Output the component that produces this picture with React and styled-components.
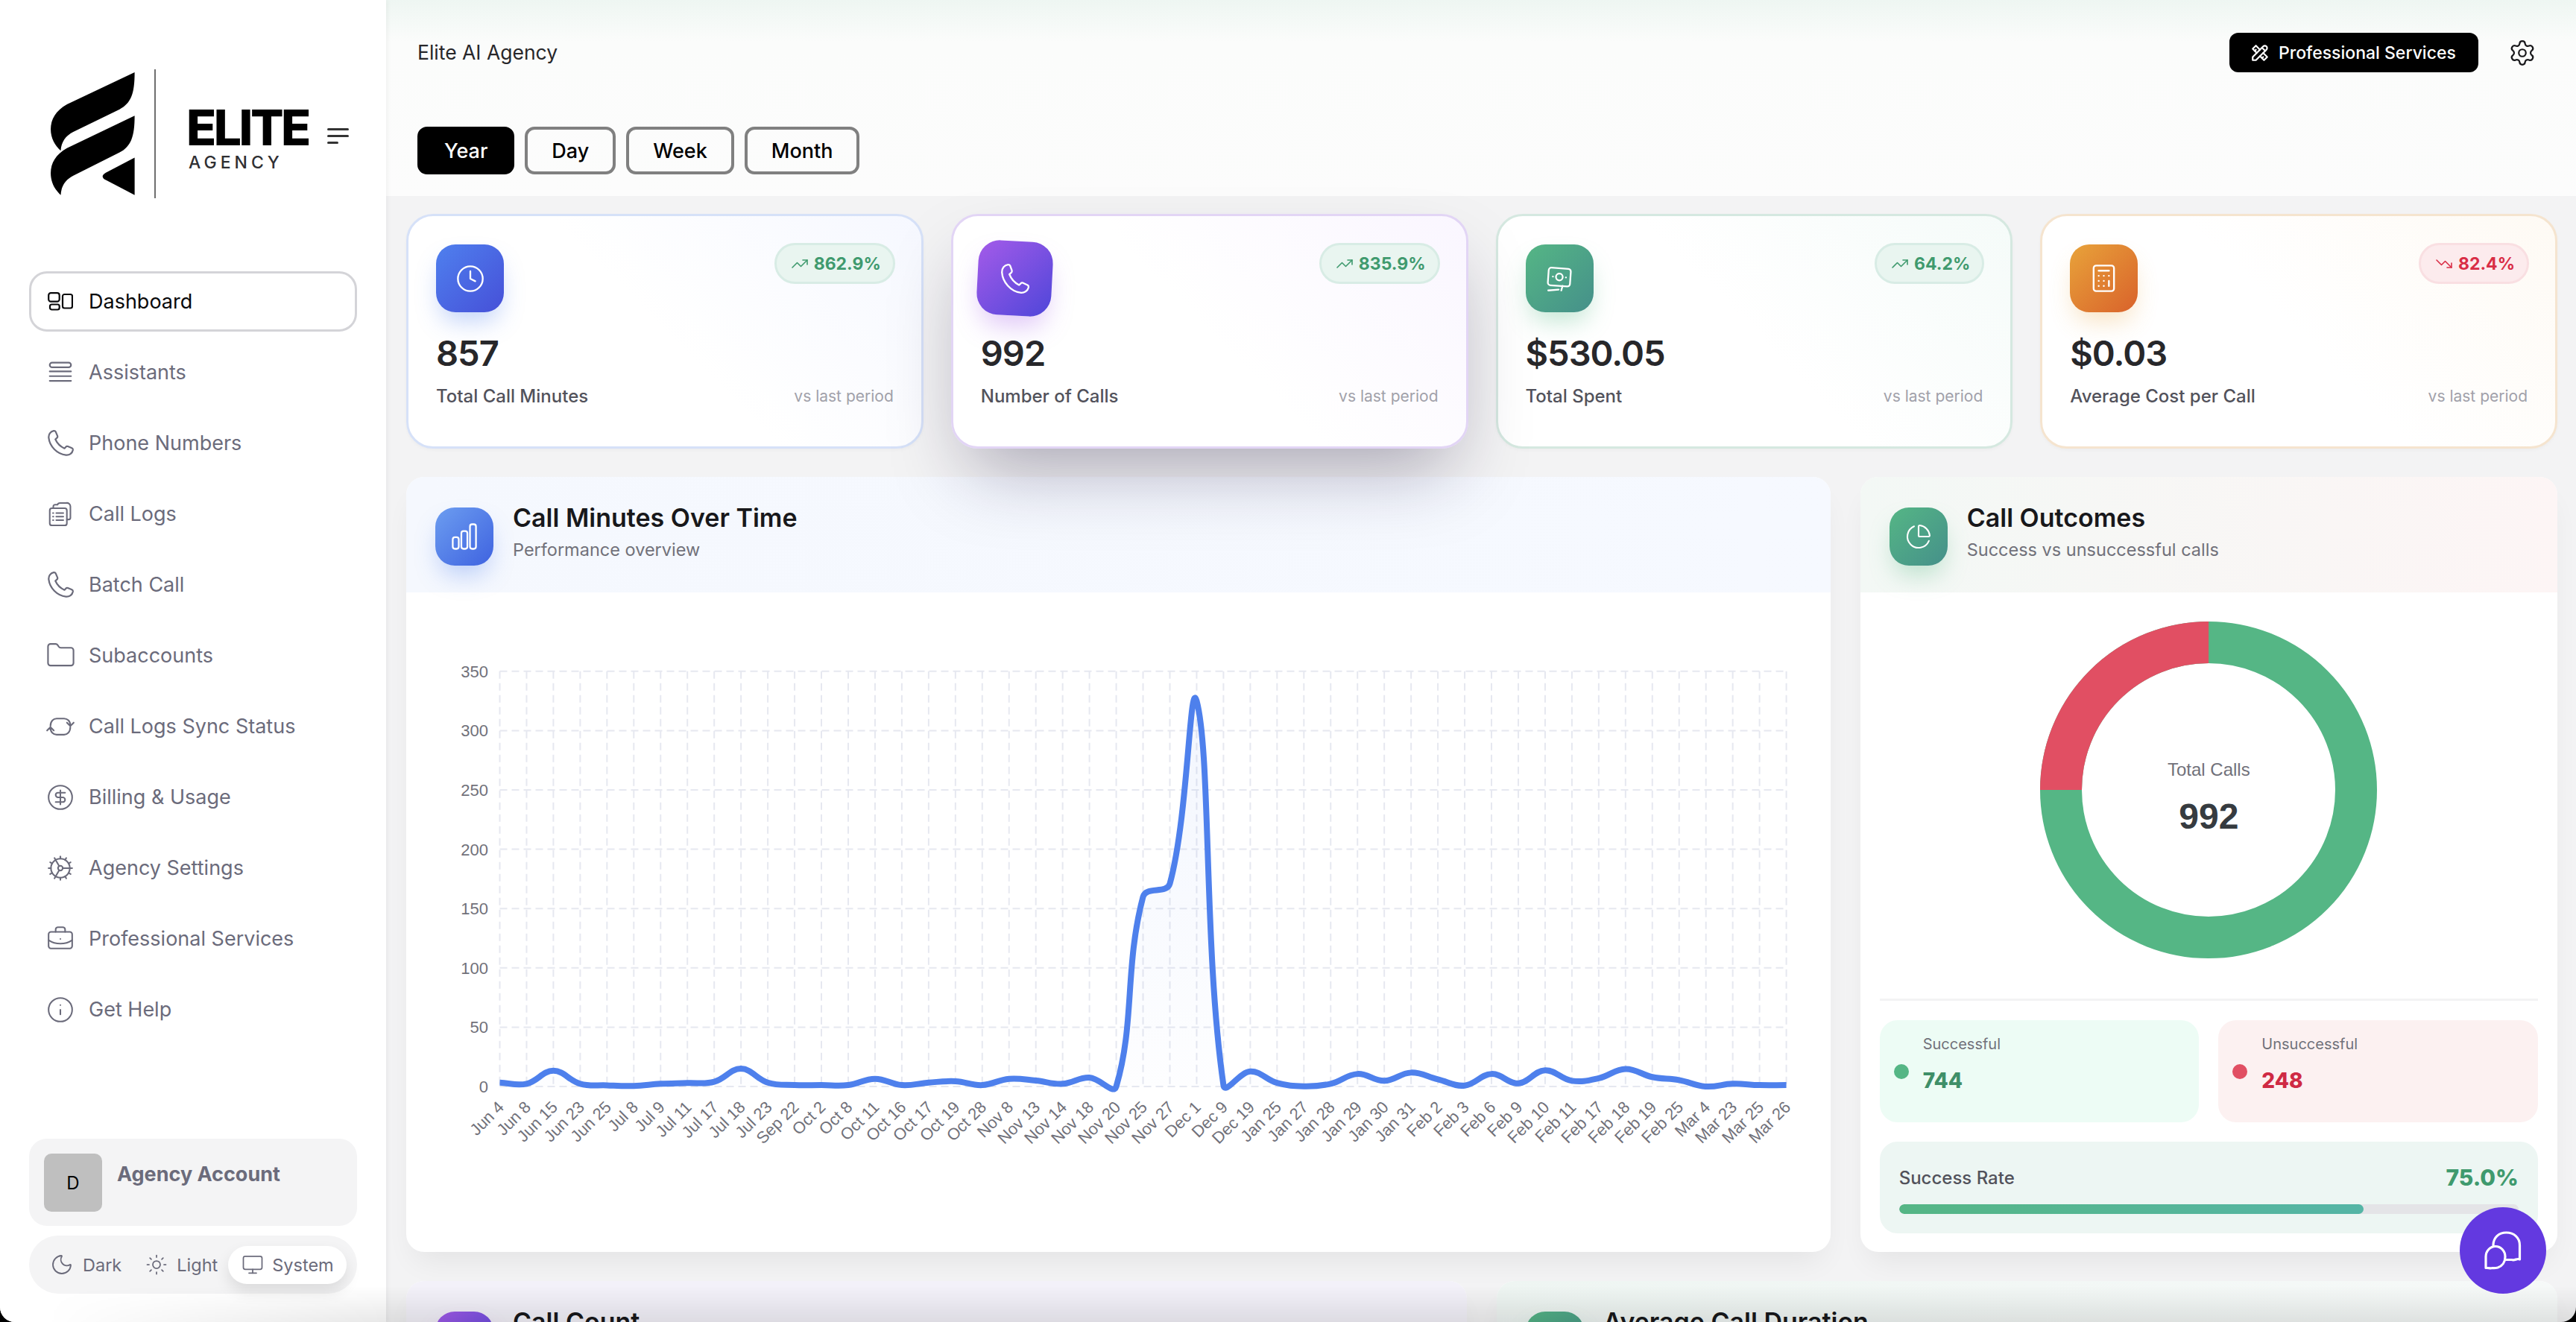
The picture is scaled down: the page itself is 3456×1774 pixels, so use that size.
import styled, { createGlobalStyle } from 'styled-components';
import {
    Folder,
    CircleDollarSign,
    Cog,
    BriefcaseBusiness,
    Info,
    Moon,
    Sun,
    Monitor,
    Clock,
    Calculator,
    ChartPie,
    TrendingUp,
    TrendingDown,
    Settings,
} from 'lucide-react';
import { TbTools } from 'react-icons/tb';

const GlobalStyle = createGlobalStyle`
    html, body {
        margin: 0;
        padding: 0;
        height: 100%;
        background: #000;
        overflow: hidden;
    }
    * {
        box-sizing: border-box;
    }
    body {
        font-family: Inter, "Noto Sans", sans-serif;
    }
`;

const Page = styled.div`
    position: relative;
    display: flex;
    width: 3456px;
    height: 1774px;
    overflow: hidden;
    background: #f3f3f4;
    border-radius: 0 0 20px 20px;
`;

const Sidebar = styled.aside`
    position: relative;
    z-index: 3;
    flex: 0 0 518px;
    min-width: 0;
    width: 518px;
    display: flex;
    flex-direction: column;
    padding: 93px 39px 38px;
    background: #fff;
    box-shadow: 2px 0 6px rgba(0, 0, 0, 0.05);
`;

const LogoRow = styled.div`
    display: flex;
    align-items: flex-start;
    height: 173px;
    margin-bottom: 98px;
    padding-left: 29px;
`;

const LogoDivider = styled.div`
    flex: 0 0 2px;
    height: 173px;
    margin: 0 41px 0 26px;
    background: #6f6f6f;
`;

const LogoText = styled.div`
    display: flex;
    flex-direction: column;
    padding-top: 50px;
`;

const LogoName = styled.div`
    font-size: 66px;
    line-height: 56px;
    font-weight: 800;
    color: #000;
    letter-spacing: -3.5px;
`;

const LogoSub = styled.div`
    margin: 6px 0 0 3px;
    font-size: 23px;
    line-height: 26px;
    font-weight: 500;
    letter-spacing: 5px;
    color: #2f2f33;
`;

const MenuLines = styled.div`
    display: flex;
    flex-direction: column;
    gap: 6px;
    margin: 79px 0 0 25px;
`;

const MenuLine = styled.span`
    display: block;
    height: 3px;
    width: ${(p) => p.$w}px;
    background: #333;
    border-radius: 2px;
`;

const NavList = styled.nav`
    display: flex;
    flex-direction: column;
    gap: 14px;
`;

const NavItem = styled.a`
    display: flex;
    align-items: center;
    gap: 21px;
    height: 81px;
    padding: 0 22px;
    border-radius: 24px;
    border: 3px solid ${(p) => (p.$active ? '#d4d4d8' : 'transparent')};
    color: ${(p) => (p.$active ? '#09090b' : '#6b6b7b')};
    font-size: 27px;
    font-weight: 400;
    white-space: nowrap;
`;

const NavIconBox = styled.span`
    display: flex;
    align-items: center;
    justify-content: center;
    flex: 0 0 34px;
    width: 34px;
    height: 34px;
    svg {
        flex-shrink: 0;
    }
`;

const SideBottom = styled.div`
    display: flex;
    flex-direction: column;
    gap: 13px;
    margin-top: auto;
`;

const AccountCard = styled.div`
    display: flex;
    gap: 20px;
    height: 117px;
    padding: 20px;
    background: #f4f4f5;
    border-radius: 24px;
`;

const Avatar = styled.div`
    display: flex;
    align-items: center;
    justify-content: center;
    width: 78px;
    height: 78px;
    border-radius: 10px;
    background: #bfbfbf;
    color: #000;
    font-size: 24px;
`;

const AccountName = styled.div`
    margin-top: 12px;
    font-size: 27px;
    line-height: 32px;
    font-weight: 700;
    color: #6b6b7b;
`;

const ThemeSwitch = styled.div`
    display: flex;
    align-items: center;
    height: 78px;
    padding: 0 13px 0 28px;
    background: #f4f4f5;
    border-radius: 39px;
`;

const ThemeOption = styled.div`
    display: flex;
    align-items: center;
    gap: ${(p) => p.$gap}px;
    height: 51px;
    margin-left: ${(p) => p.$ml || 0}px;
    padding: ${(p) => (p.$active ? '0 17px 0 18px' : '0')};
    border-radius: 26px;
    font-size: 23.5px;
    color: #6b6b7b;
    background: ${(p) => (p.$active ? '#fff' : 'transparent')};
    box-shadow: ${(p) => (p.$active ? '0 10px 20px rgba(0, 0, 0, 0.1)' : 'none')};
`;

const Main = styled.main`
    flex: 1;
    min-width: 0;
    display: flex;
    flex-direction: column;
`;

const Header = styled.header`
    flex: 0 0 263px;
    padding: 44px 53px 0 42px;
    background: linear-gradient(#eef6f2 0, #fbfcfb 56px, #fcfcfc 100%);
`;

const HeaderTop = styled.div`
    display: flex;
    align-items: center;
    justify-content: space-between;
    height: 53px;
    margin-bottom: 73px;
`;

const BrandTitle = styled.div`
    margin-top: -2px;
    font-size: 26.5px;
    color: #27272a;
`;

const HeaderActions = styled.div`
    display: flex;
    align-items: center;
    gap: 40px;
    color: #18181b;
`;

const ServicesButton = styled.button`
    display: flex;
    align-items: center;
    gap: 12px;
    width: 334px;
    height: 53px;
    padding: 0 0 0 28px;
    border: 0;
    border-radius: 12px;
    background: #000;
    color: #fff;
    font-family: inherit;
    font-size: 23px;
    font-weight: 500;
    white-space: nowrap;
`;

const Tabs = styled.div`
    display: flex;
    gap: 14px;
`;

const Tab = styled.button`
    height: 64px;
    padding: 0 32px;
    border: 4px solid ${(p) => (p.$active ? '#000' : '#808080')};
    border-radius: 13px;
    background: ${(p) => (p.$active ? '#000' : 'transparent')};
    color: ${(p) => (p.$active ? '#fff' : '#000')};
    font-family: inherit;
    font-size: 27px;
    font-weight: 500;
`;

const Content = styled.div`
    display: flex;
    flex-direction: column;
    padding: 24px 25px 0 27px;
`;

const StatGrid = styled.div`
    display: grid;
    grid-template-columns: repeat(4, 1fr);
    gap: 37px;
    height: 315px;
    margin-bottom: 38px;
`;

const tones = {
    blue: { border: '#d6e1f8', tint: '#f6f8ff', from: '#4f80ee', to: '#4650d8', glow: 'rgba(79, 128, 238, 0.35)' },
    purple: { border: '#e2d5f5', tint: '#faf6ff', from: '#a45be9', to: '#4f46d9', glow: 'rgba(164, 91, 233, 0.35)' },
    green: { border: '#d5e8e0', tint: '#f5fbf9', from: '#55b685', to: '#45908a', glow: 'rgba(85, 182, 133, 0.35)' },
    orange: { border: '#f5e4cf', tint: '#fefaf4', from: '#e8a33a', to: '#d9622b', glow: 'rgba(232, 163, 58, 0.3)' },
    sky: { border: '#d6e1f8', tint: '#f6f8ff', from: '#6c9df0', to: '#3f63e0', glow: 'rgba(79, 128, 238, 0.35)' },
};

const StatCard = styled.div`
    position: relative;
    z-index: ${(p) => (p.$hover ? 2 : 0)};
    display: flex;
    flex-direction: column;
    padding: 38px 37px 0;
    border: 3px solid ${(p) => tones[p.$tone].border};
    border-radius: 36px;
    background: linear-gradient(225deg, ${(p) => tones[p.$tone].tint}, #fff 50%);
    box-shadow: ${(p) => (p.$hover ? '0 50px 100px -24px rgba(30, 20, 60, 0.34)' : '0 2px 4px rgba(0, 0, 0, 0.03)')};
`;

const StatTop = styled.div`
    display: flex;
    align-items: flex-start;
    justify-content: space-between;
    height: 102px;
`;

const IconTile = styled.div`
    display: flex;
    align-items: center;
    justify-content: center;
    flex: 0 0 auto;
    width: ${(p) => p.$size}px;
    height: ${(p) => p.$size}px;
    border-radius: 26px;
    color: #fff;
    background: linear-gradient(135deg, ${(p) => tones[p.$tone].from}, ${(p) => tones[p.$tone].to});
    box-shadow: 0 18px 32px -6px ${(p) => tones[p.$tone].glow};
    transform: ${(p) => (p.$hover ? 'rotate(3deg) scale(1.1)' : 'none')};
`;

const TrendBadge = styled.div`
    display: flex;
    align-items: center;
    gap: 7px;
    height: 55px;
    margin: -2px -2px 0 0;
    padding: 0 16px 0 19px;
    border-radius: 28px;
    border: 3px solid ${(p) => (p.$down ? '#f9dfe2' : '#d8ece5')};
    background: ${(p) => (p.$down ? '#fcebed' : '#e9f5f0')};
    color: ${(p) => (p.$down ? '#d92d46' : '#3f9a6e')};
    font-size: 23px;
    font-weight: 700;
`;

const StatValue = styled.div`
    margin-top: 12px;
    font-size: 47px;
    line-height: 64px;
    font-weight: 600;
    color: #27272a;
    letter-spacing: -1px;
`;

const StatFoot = styled.div`
    display: flex;
    align-items: center;
    justify-content: space-between;
    margin-top: 11px;
`;

const StatLabel = styled.div`
    font-size: 24px;
    font-weight: 500;
    color: #52525b;
`;

const StatNote = styled.div`
    font-size: 21px;
    color: #a1a1aa;
`;

const ChartRow = styled.div`
    display: grid;
    grid-template-columns: repeat(3, 1fr);
    gap: 40px;
    height: 1040px;
    margin-bottom: 39px;
`;

const Panel = styled.section`
    grid-column: span ${(p) => p.$span || 1};
    display: flex;
    flex-direction: column;
    min-width: 0;
    border-radius: 24px;
    background: #fff;
    box-shadow: 0 22px 40px -12px rgba(0, 0, 0, 0.07);
    overflow: hidden;
`;

const PanelHeader = styled.div`
    flex: 0 0 155px;
    display: flex;
    align-items: flex-start;
    gap: 26px;
    padding: 41px 39px 0;
    background: ${(p) => p.$bg};
`;

const PanelHeading = styled.div`
    margin-top: -6px;
`;

const PanelTitle = styled.h2`
    margin: 0;
    font-size: 34px;
    line-height: 40px;
    font-weight: 600;
    color: #18181b;
    white-space: nowrap;
`;

const PanelSub = styled.p`
    margin: 8px 0 0;
    font-size: 23.5px;
    line-height: 30px;
    color: #71717a;
`;

const ChartBody = styled.div`
    flex: 1;
    line-height: 0;
`;

const AxisText = styled.text`
    font-family: "Liberation Sans", Arial, sans-serif;
    font-size: 22px;
    fill: #71717a;
`;

const OutcomeBody = styled.div`
    flex: 1;
    display: flex;
    flex-direction: column;
    padding: 39px 26px 0;
`;

const DonutWrap = styled.div`
    position: relative;
    width: 452px;
    height: 452px;
    margin: 0 auto 54px;
`;

const DonutCenter = styled.div`
    position: absolute;
    inset: 0;
    display: flex;
    flex-direction: column;
    align-items: center;
    padding-top: 185px;
    font-family: "Liberation Sans", Arial, sans-serif;
`;

const DonutLabel = styled.div`
    font-size: 24px;
    line-height: 28px;
    color: #71717a;
`;

const DonutValue = styled.div`
    margin-top: 21px;
    font-size: 48px;
    line-height: 56px;
    font-weight: 700;
    color: #363b40;
`;

const Divider = styled.hr`
    width: 100%;
    height: 3px;
    margin: 0 0 26px;
    border: 0;
    background: #f3f3f4;
`;

const OutcomeGrid = styled.div`
    display: grid;
    grid-template-columns: 1fr 1fr;
    gap: 26px;
    margin-bottom: 26px;
`;

const OutcomeBox = styled.div`
    display: flex;
    align-items: center;
    gap: 19px;
    height: 137px;
    padding: 0 19px;
    border-radius: 24px;
    background: ${(p) => (p.$bad ? '#fcf1f1' : '#edfcf5')};
`;

const OutcomeDot = styled.span`
    flex: 0 0 20px;
    height: 20px;
    border-radius: 50%;
    background: ${(p) => (p.$bad ? '#e14f63' : '#55b685')};
`;

const OutcomeText = styled.div`
    align-self: flex-start;
    display: flex;
    flex-direction: column;
    padding-top: 18px;
`;

const OutcomeLabel = styled.div`
    font-size: 20px;
    line-height: 28px;
    color: #71717a;
`;

const OutcomeValue = styled.div`
    margin-top: 17px;
    font-size: 28px;
    line-height: 36px;
    font-weight: 800;
    color: ${(p) => (p.$bad ? '#cf2a44' : '#3f8f68')};
`;

const RateBox = styled.div`
    height: 123px;
    padding: 30px 26px 0;
    border-radius: 24px;
    background: #edf6f3;
`;

const RateTop = styled.div`
    display: flex;
    align-items: center;
    justify-content: space-between;
    height: 36px;
    margin-bottom: 18px;
`;

const RateLabel = styled.div`
    font-size: 24px;
    font-weight: 500;
    color: #52525b;
`;

const RateValue = styled.div`
    font-size: 30px;
    font-weight: 800;
    color: #3f9a6e;
`;

const RateTrack = styled.div`
    height: 13px;
    border-radius: 7px;
    background: #e4e4e7;
    overflow: hidden;
`;

const RateFill = styled.div`
    height: 100%;
    border-radius: 7px;
    background: linear-gradient(90deg, #55b685, #55b5a6);
`;

const BottomRow = styled.div`
    display: grid;
    grid-template-columns: 1fr 1fr;
    gap: 40px;
`;

const ChatButton = styled.button`
    position: absolute;
    z-index: 5;
    right: 40px;
    bottom: 38px;
    display: flex;
    align-items: center;
    justify-content: center;
    width: 116px;
    height: 116px;
    padding: 0;
    border: 0;
    border-radius: 50%;
    background: #6339e0;
`;

const BottomFade = styled.div`
    position: absolute;
    z-index: 4;
    left: 0;
    right: 0;
    bottom: 0;
    height: 48px;
    background: linear-gradient(to top, rgba(0, 0, 0, 0.09), transparent);
    mask-image: linear-gradient(to right, transparent 60px, #000 518px);
    pointer-events: none;
`;

const Glyph = ({ children, size = 38, w = 1.4 }) => (
    <svg width={size} height={size} viewBox="0 0 24 24" fill="none" stroke="currentColor" strokeWidth={w} strokeLinecap="round" strokeLinejoin="round">
        {children}
    </svg>
);

const PHONE = 'M6.5 2.5C4 3 2.3 5.2 2.6 8C3.4 14.8 9.2 20.6 16 21.4C18.8 21.7 21 20 21.5 17.5C21.6 16.8 21.3 16.2 20.7 15.9L17.6 14.6C17 14.4 16.4 14.5 16 15L14.9 16.2C12 14.9 9.1 12 7.8 9.1L9 8C9.5 7.6 9.6 7 9.4 6.4L8.1 3.3C7.8 2.7 7.2 2.4 6.5 2.5Z';

const PhoneIcon = ({ size = 35, w = 1.3 }) => (
    <svg width={size} height={size} viewBox="1.8 1.8 20.4 20.4" fill="none" stroke="currentColor" strokeWidth={w} strokeLinejoin="round">
        <path d={PHONE} />
    </svg>
);

const DashIcon = () => (
    <svg width="34" height="26" viewBox="0 0 34 26" fill="none" stroke="currentColor" strokeWidth="2.2">
        <rect x="1.2" y="1.2" width="14.5" height="11.5" rx="3" />
        <rect x="3" y="16.5" width="12.7" height="7" rx="2.5" />
        <rect x="20" y="3" width="13" height="18.5" rx="2.5" />
    </svg>
);

const AssistantsIcon = () => (
    <Glyph>
        <rect x="3" y="3.5" width="18" height="4" rx="2" />
        <path d="M3 11h18M3 15h18M3 19h18" />
    </Glyph>
);

const LogsIcon = () => (
    <Glyph w={1.3}>
        <path d="M6 7V5.5A1.5 1.5 0 0 1 7.5 4h2c.3-1 1-1.5 2.2-1.5H17a3 3 0 0 1 3.5 3V15a1.5 1.5 0 0 1-1.5 1.5h-1.5" />
        <rect x="3" y="7" width="14.5" height="14.5" rx="1.8" />
        <path d="M8.5 11h6M8.5 14h6M8.5 17h6M5.7 11h.4M5.7 14h.4M5.7 17h.4" />
    </Glyph>
);

const SyncIcon = () => (
    <Glyph size={40} w={1.25}>
        <path d="M4 11.5C4 7.5 6.5 5.5 9 5.5h6c2.5 0 5 2 5 5.5M17.3 8.8L20 11.6L22.7 8.8" />
        <path d="M20 12.5c0 4-2.5 6-5 6H9c-2.5 0-5-2-5-5.5M1.3 15.2L4 12.4L6.7 15.2" />
    </Glyph>
);

const BillIcon = () => (
    <Glyph size={42} w={1.3}>
        <g transform="rotate(4 12 11)">
            <rect x="3.5" y="4" width="17" height="13.5" rx="2" />
            <circle cx="12" cy="10.7" r="2.6" />
            <path d="M7 10.7h.1M17 10.7h.1" />
        </g>
        <path d="M3.5 21l8-.6M14.5 17.5l-1 3.5" />
    </Glyph>
);

const BarsIcon = () => (
    <Glyph size={44} w={1.25}>
        <rect x="3.5" y="12.5" width="4.4" height="8.5" rx="1.6" />
        <rect x="9.8" y="8" width="4.4" height="13" rx="1.6" />
        <rect x="16.1" y="3" width="4.4" height="18" rx="1.6" />
    </Glyph>
);

const ChatIcon = () => (
    <svg width="50" height="52" viewBox="0 0 50 52" fill="none" stroke="#fff" strokeWidth="3.2" strokeLinejoin="round" strokeLinecap="round">
        <path d="M12 19C12 8.5 19.5 2 29.5 2S47.5 8.5 47.5 19V38C44 36 41 40 37 38.5H29" />
        <path d="M28 34.5C28 26.5 22 20.5 15 20.5S2 26.5 2 34.5V49.5C5.5 49 7.5 50.5 11 49.5C14 50 16 49.5 18 49C24 47 28 41.5 28 34.5Z" />
    </svg>
);

const LogoMark = () => (
    <svg width="113" height="165" viewBox="205 292 336 491" fill="#000" style={{ flexShrink: 0, marginTop: 4 }}>
        <path d="M540 292L270 420C225 445 205 480 205 520C205 555 222 585 245 605C247 570 265 545 295 530L480 440C525 415 540 380 540 292Z" />
        <path d="M540 465L270 595C225 620 205 655 205 695C205 730 222 762 245 782C247 745 265 720 295 705L480 612C525 588 540 550 540 465Z" />
        <path d="M540 633L425 693C408 703 408 712 425 722L540 782Z" />
    </svg>
);

const navItems = [
    { label: 'Dashboard', icon: <DashIcon />, active: true },
    { label: 'Assistants', icon: <AssistantsIcon /> },
    { label: 'Phone Numbers', icon: <PhoneIcon /> },
    { label: 'Call Logs', icon: <LogsIcon /> },
    { label: 'Batch Call', icon: <PhoneIcon /> },
    { label: 'Subaccounts', icon: <Folder size={41} strokeWidth={1.25} /> },
    { label: 'Call Logs Sync Status', icon: <SyncIcon /> },
    { label: 'Billing & Usage', icon: <CircleDollarSign size={38} strokeWidth={1.3} /> },
    { label: 'Agency Settings', icon: <Cog size={38} strokeWidth={1.3} /> },
    { label: 'Professional Services', icon: <BriefcaseBusiness size={38} strokeWidth={1.3} /> },
    { label: 'Get Help', icon: <Info size={38} strokeWidth={1.3} /> },
];

const stats = [
    { tone: 'blue', value: '857', label: 'Total Call Minutes', trend: '862.9%', icon: <Clock size={40} strokeWidth={1.4} /> },
    { tone: 'purple', value: '992', label: 'Number of Calls', trend: '835.9%', icon: <PhoneIcon size={36} w={1.2} />, hover: true },
    { tone: 'green', value: '$530.05', label: 'Total Spent', trend: '64.2%', icon: <BillIcon /> },
    { tone: 'orange', value: '$0.03', label: 'Average Cost per Call', trend: '82.4%', icon: <Calculator size={41} strokeWidth={1.4} />, down: true },
];

const series = [
    ['Jun 4', 3.3], ['Jun 8', 2.3], ['Jun 15', 13.3], ['Jun 23', 2.3], ['Jun 25', 1], ['Jul 8', 0.5], ['Jul 9', 2.3],
    ['Jul 11', 3], ['Jul 17', 4], ['Jul 18', 15], ['Jul 23', 3.3], ['Sep 22', 1.2], ['Oct 2', 1.2], ['Oct 8', 1.2],
    ['Oct 11', 6.5], ['Oct 16', 1.2], ['Oct 17', 3.3], ['Oct 19', 4.4], ['Oct 28', 1.2], ['Nov 8', 6.5], ['Nov 13', 5],
    ['Nov 14', 2.3], ['Nov 18', 7.5], ['Nov 20', 0], ['Nov 25', 160], ['Nov 27', 171], ['Dec 1', 325], ['Dec 9', 1.2],
    ['Dec 19', 12.7], ['Jan 25', 3], ['Jan 27', 0.2], ['Jan 28', 2.3], ['Jan 29', 10.6], ['Jan 30', 4.8], ['Jan 31', 11.7],
    ['Feb 2', 6], ['Feb 3', 0.8], ['Feb 6', 10.6], ['Feb 9', 2.7], ['Feb 10', 13.7], ['Feb 11', 4.8], ['Feb 17', 7],
    ['Feb 18', 14.8], ['Feb 19', 8], ['Feb 25', 5.4], ['Mar 4', 0], ['Mar 23', 2.3], ['Mar 25', 1.2], ['Mar 26', 1.2],
];

const CHART = { left: 125.5, top: 105.7, stepX: 35.96, perUnit: 1.592, zeroY: 663 };

const toPoint = (value, i) => ({ x: CHART.left + i * CHART.stepX, y: CHART.zeroY - value * CHART.perUnit });

// same spline the chart lib draws with tension .4
const splinePath = (pts) => {
    const t = 0.4;
    const ctrl = pts.map((p, i) => {
        const a = pts[i - 1] || p;
        const b = pts[i + 1] || p;
        const d1 = Math.hypot(p.x - a.x, p.y - a.y);
        const d2 = Math.hypot(b.x - p.x, b.y - p.y);
        const sum = d1 + d2 || 1;
        return {
            inX: p.x - (t * d1 * (b.x - a.x)) / sum,
            inY: p.y - (t * d1 * (b.y - a.y)) / sum,
            outX: p.x + (t * d2 * (b.x - a.x)) / sum,
            outY: p.y + (t * d2 * (b.y - a.y)) / sum,
        };
    });
    let d = `M${pts[0].x} ${pts[0].y}`;
    for (let i = 1; i < pts.length; i++) {
        d += `C${ctrl[i - 1].outX} ${ctrl[i - 1].outY} ${ctrl[i].inX} ${ctrl[i].inY} ${pts[i].x} ${pts[i].y}`;
    }
    return d;
};

function LineChart() {
    const pts = series.map(([, v], i) => toPoint(v, i));
    const line = splinePath(pts);
    const right = CHART.left + 48 * CHART.stepX;
    return (
        <svg width="1911" height="885" viewBox="0 0 1911 885">
            <defs>
                <linearGradient id="areaFill" x1="0" y1="0" x2="0" y2="1">
                    <stop offset="0" stopColor="#4f80ee" stopOpacity="0.07" />
                    <stop offset="1" stopColor="#4f80ee" stopOpacity="0.01" />
                </linearGradient>
            </defs>
            {[0, 50, 100, 150, 200, 250, 300, 350].map((v) => {
                const y = CHART.zeroY - v * CHART.perUnit;
                return (
                    <g key={v}>
                        <line x1={CHART.left} x2={right} y1={y} y2={y} stroke="#e6e8f0" strokeWidth="2" strokeDasharray="10 6" />
                        <AxisText x={110} y={y + 8} textAnchor="end">{v}</AxisText>
                    </g>
                );
            })}
            {series.map(([name], i) => {
                const x = CHART.left + i * CHART.stepX;
                return (
                    <g key={name}>
                        <line x1={x} x2={x} y1={CHART.top} y2={CHART.zeroY} stroke="#e6e8f0" strokeWidth="2" strokeDasharray="10 6" />
                        <AxisText x={x + 7} y={CHART.zeroY + 29} textAnchor="end" transform={`rotate(-45 ${x + 7} ${CHART.zeroY + 29})`}>{name}</AxisText>
                    </g>
                );
            })}
            <path d={`${line}L${right} ${CHART.zeroY}L${CHART.left} ${CHART.zeroY}Z`} fill="url(#areaFill)" />
            <path d={line} fill="none" stroke="#4e80ec" strokeWidth="8" />
        </svg>
    );
}

function Donut() {
    const r = 198;
    const c = 2 * Math.PI * r;
    return (
        <svg width="452" height="452" viewBox="0 0 452 452">
            <circle cx="226" cy="226" r={r} fill="none" stroke="#55b685" strokeWidth="56" />
            <circle cx="226" cy="226" r={r} fill="none" stroke="#e14f63" strokeWidth="56" strokeDasharray={`${c * 0.25} ${c * 0.75}`} transform="rotate(-180 226 226)" />
        </svg>
    );
}

export default function App() {
    return (
        <Page>
            <GlobalStyle />
            <Sidebar>
                <LogoRow>
                    <LogoMark />
                    <LogoDivider />
                    <LogoText>
                        <LogoName>ELITE</LogoName>
                        <LogoSub>AGENCY</LogoSub>
                    </LogoText>
                    <MenuLines>
                        <MenuLine $w={29} />
                        <MenuLine $w={29} />
                        <MenuLine $w={15} />
                    </MenuLines>
                </LogoRow>
                <NavList>
                    {navItems.map((item) => (
                        <NavItem key={item.label} $active={item.active}>
                            <NavIconBox>{item.icon}</NavIconBox>
                            {item.label}
                        </NavItem>
                    ))}
                </NavList>
                <SideBottom>
                    <AccountCard>
                        <Avatar>D</Avatar>
                        <AccountName>Agency Account</AccountName>
                    </AccountCard>
                    <ThemeSwitch>
                        <ThemeOption $gap={12}><Moon size={32} strokeWidth={1.4} />Dark</ThemeOption>
                        <ThemeOption $gap={12} $ml={32}><Sun size={30} strokeWidth={1.4} />Light</ThemeOption>
                        <ThemeOption $gap={11} $ml={14} $active><Monitor size={30} strokeWidth={1.4} />System</ThemeOption>
                    </ThemeSwitch>
                </SideBottom>
            </Sidebar>
            <Main>
                <Header>
                    <HeaderTop>
                        <BrandTitle>Elite AI Agency</BrandTitle>
                        <HeaderActions>
                            <ServicesButton><TbTools size={26} />Professional Services</ServicesButton>
                            <Settings size={38} strokeWidth={1.4} />
                        </HeaderActions>
                    </HeaderTop>
                    <Tabs>
                        <Tab $active>Year</Tab>
                        <Tab>Day</Tab>
                        <Tab>Week</Tab>
                        <Tab>Month</Tab>
                    </Tabs>
                </Header>
                <Content>
                    <StatGrid>
                        {stats.map((s) => (
                            <StatCard key={s.label} $tone={s.tone} $hover={s.hover}>
                                <StatTop>
                                    <IconTile $tone={s.tone} $size={91} $hover={s.hover}>{s.icon}</IconTile>
                                    <TrendBadge $down={s.down}>
                                        {s.down ? <TrendingDown size={24} strokeWidth={1.6} /> : <TrendingUp size={24} strokeWidth={1.6} />}
                                        {s.trend}
                                    </TrendBadge>
                                </StatTop>
                                <StatValue>{s.value}</StatValue>
                                <StatFoot>
                                    <StatLabel>{s.label}</StatLabel>
                                    <StatNote>vs last period</StatNote>
                                </StatFoot>
                            </StatCard>
                        ))}
                    </StatGrid>
                    <ChartRow>
                        <Panel $span={2}>
                            <PanelHeader $bg="linear-gradient(90deg, #f5f8fe, #f6f9ff)">
                                <IconTile $tone="sky" $size={78}><BarsIcon /></IconTile>
                                <PanelHeading>
                                    <PanelTitle>Call Minutes Over Time</PanelTitle>
                                    <PanelSub>Performance overview</PanelSub>
                                </PanelHeading>
                            </PanelHeader>
                            <ChartBody>
                                <LineChart />
                            </ChartBody>
                        </Panel>
                        <Panel>
                            <PanelHeader $bg="linear-gradient(90deg, #f3f8f5, #fdf5f5)">
                                <IconTile $tone="green" $size={78}><ChartPie size={36} strokeWidth={1.4} /></IconTile>
                                <PanelHeading>
                                    <PanelTitle>Call Outcomes</PanelTitle>
                                    <PanelSub>Success vs unsuccessful calls</PanelSub>
                                </PanelHeading>
                            </PanelHeader>
                            <OutcomeBody>
                                <DonutWrap>
                                    <Donut />
                                    <DonutCenter>
                                        <DonutLabel>Total Calls</DonutLabel>
                                        <DonutValue>992</DonutValue>
                                    </DonutCenter>
                                </DonutWrap>
                                <Divider />
                                <OutcomeGrid>
                                    <OutcomeBox>
                                        <OutcomeDot />
                                        <OutcomeText>
                                            <OutcomeLabel>Successful</OutcomeLabel>
                                            <OutcomeValue>744</OutcomeValue>
                                        </OutcomeText>
                                    </OutcomeBox>
                                    <OutcomeBox $bad>
                                        <OutcomeDot $bad />
                                        <OutcomeText>
                                            <OutcomeLabel>Unsuccessful</OutcomeLabel>
                                            <OutcomeValue $bad>248</OutcomeValue>
                                        </OutcomeText>
                                    </OutcomeBox>
                                </OutcomeGrid>
                                <RateBox>
                                    <RateTop>
                                        <RateLabel>Success Rate</RateLabel>
                                        <RateValue>75.0%</RateValue>
                                    </RateTop>
                                    <RateTrack>
                                        <RateFill style={{ width: `${(744 / 992) * 100}%` }} />
                                    </RateTrack>
                                </RateBox>
                            </OutcomeBody>
                        </Panel>
                    </ChartRow>
                    <BottomRow>
                        <Panel>
                            <PanelHeader $bg="#f3f1f9">
                                <IconTile $tone="purple" $size={78}><BarsIcon /></IconTile>
                                <PanelHeading>
                                    <PanelTitle>Call Count</PanelTitle>
                                </PanelHeading>
                            </PanelHeader>
                        </Panel>
                        <Panel>
                            <PanelHeader $bg="linear-gradient(90deg, #eef5f2, #f6f9f8)">
                                <IconTile $tone="green" $size={78}><Clock size={38} strokeWidth={1.4} /></IconTile>
                                <PanelHeading>
                                    <PanelTitle>Average Call Duration</PanelTitle>
                                </PanelHeading>
                            </PanelHeader>
                        </Panel>
                    </BottomRow>
                </Content>
            </Main>
            <BottomFade />
            <ChatButton><ChatIcon /></ChatButton>
        </Page>
    );
}
